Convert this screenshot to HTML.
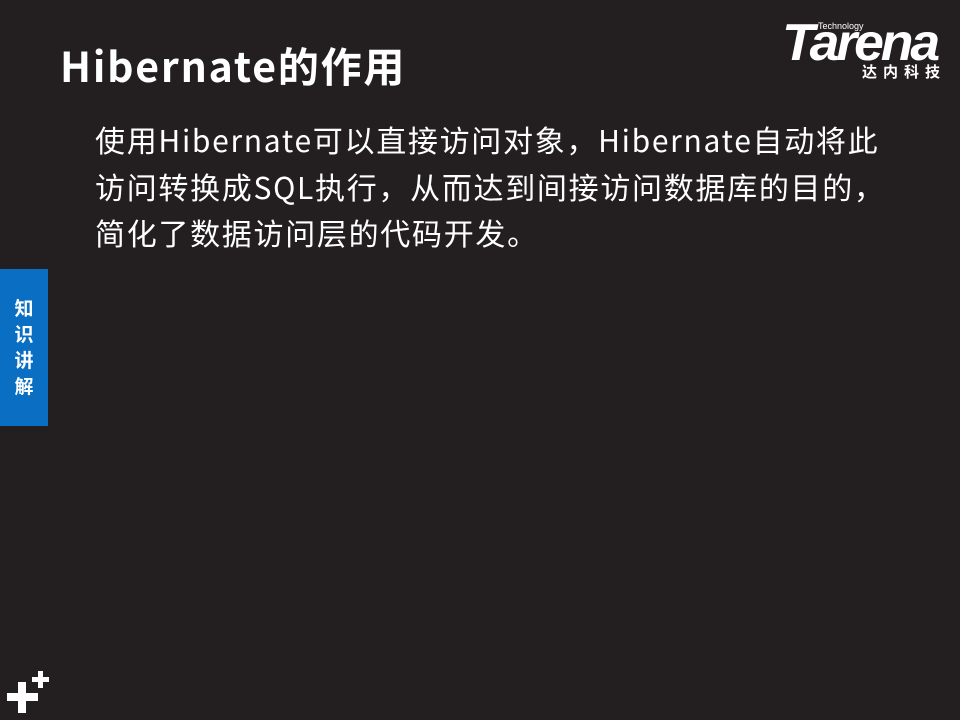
<!DOCTYPE html>
<html><head><meta charset="utf-8"><style>
html,body{margin:0;padding:0}
body{width:960px;height:720px;background:#231f20;position:relative;overflow:hidden;font-family:"Noto Sans CJK SC","Liberation Sans",sans-serif;color:#fff}
.t{position:absolute;left:60px;top:34px;font-size:41px;font-weight:bold;line-height:60px;white-space:nowrap;letter-spacing:1.8px}
.b{position:absolute;left:95px;top:116px;font-size:30px;line-height:46.5px;white-space:nowrap;letter-spacing:1.7px}
.side{position:absolute;left:0;top:269px;width:48px;height:157px;background:#0a6fc2}
.side div{position:absolute;left:0;width:48px;top:26px;font-size:19px;font-weight:bold;line-height:26px;text-align:center}
.logo{position:absolute;left:782px;top:19px;width:170px;height:65px}
</style></head><body>
<div class="t">Hibernate的作用</div>
<div class="b">使用Hibernate可以直接访问对象，Hibernate自动将此<br>访问转换成SQL执行，从而达到间接访问数据库的目的，<br>简化了数据访问层的代码开发。</div>
<div class="side"><div>知<br>识<br>讲<br>解</div></div>
<div class="logo">
<div style="position:absolute;left:36px;top:2px;font-family:'Liberation Sans',sans-serif;font-size:9px;color:#fff">Technology</div>
<div style="position:absolute;left:0;top:-4px;font-family:'Liberation Sans',sans-serif;font-size:52px;font-weight:bold;font-style:italic;letter-spacing:-3px;line-height:56px;transform:scaleX(1.03);transform-origin:left">Tarena</div>
<div style="position:absolute;left:80px;top:44px;font-size:15px;font-weight:bold;letter-spacing:6px;line-height:18px">达内科技</div>
</div>
<div style="position:absolute;left:7px;top:693px;width:31px;height:8px;background:#fff"></div>
<div style="position:absolute;left:18px;top:682px;width:8px;height:31px;background:#fff"></div>
<div style="position:absolute;left:32px;top:677px;width:17px;height:5px;background:#fff"></div>
<div style="position:absolute;left:38px;top:671px;width:5px;height:17px;background:#fff"></div>
</body></html>
